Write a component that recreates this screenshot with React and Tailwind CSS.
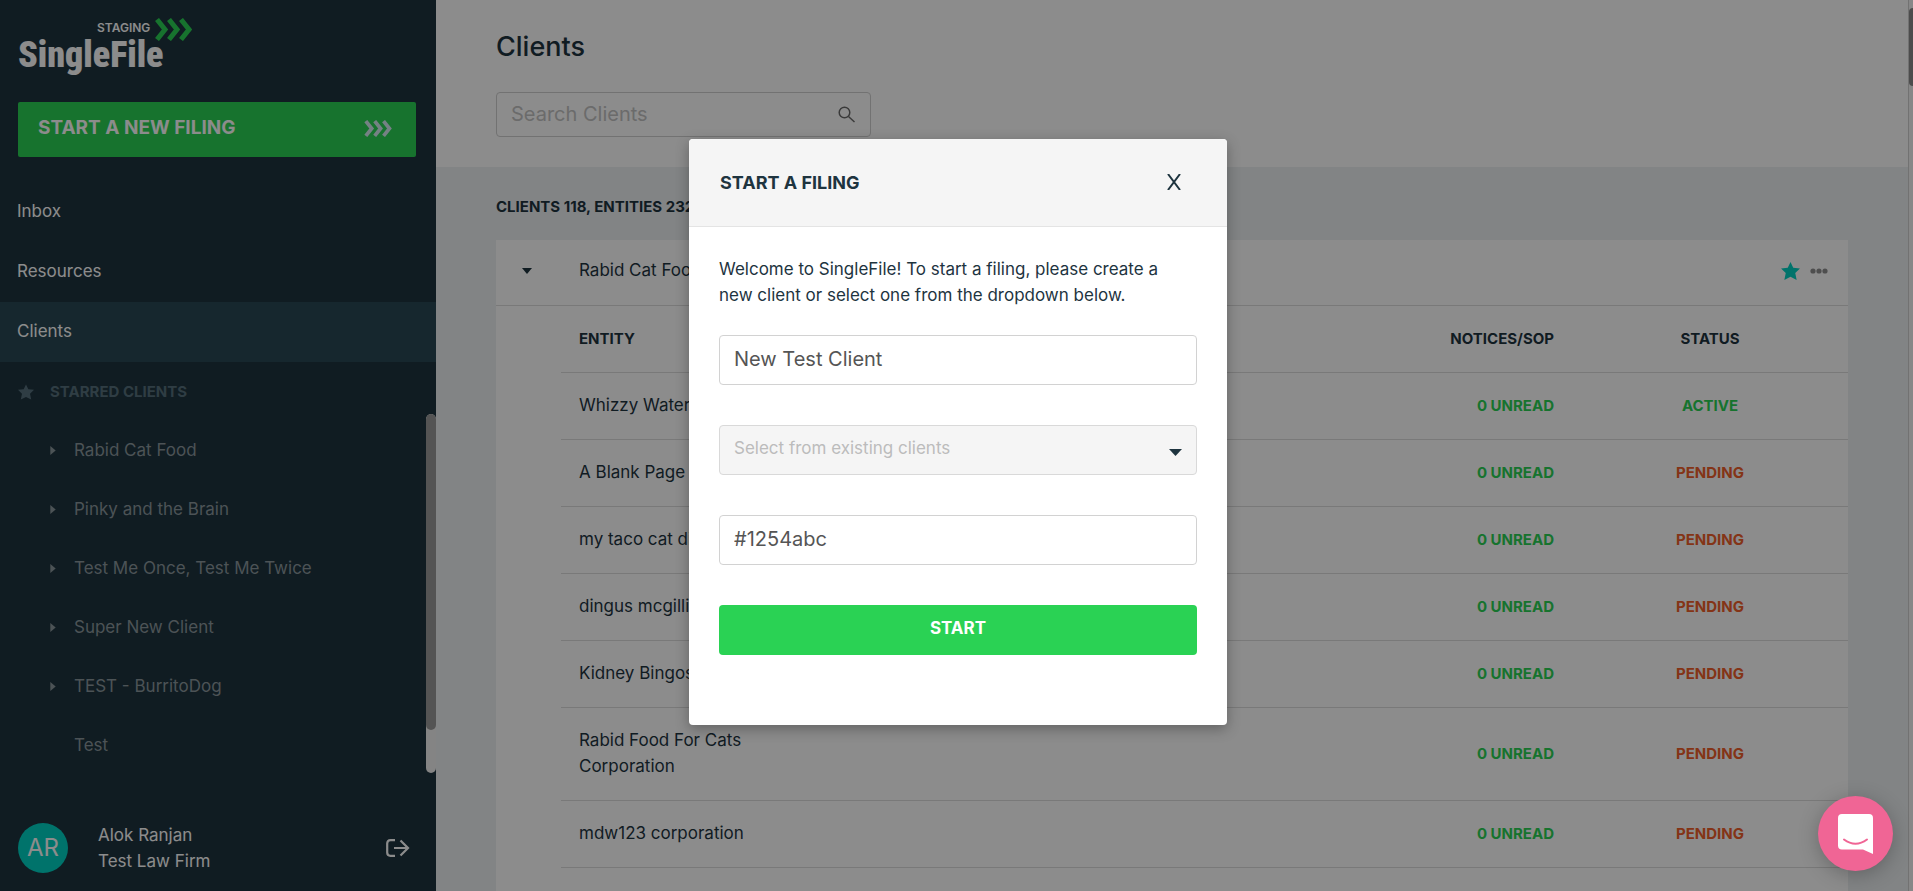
import React from "react";

const starred = [
  { name: "Rabid Cat Food", open: true },
  { name: "Pinky and the Brain", open: true },
  { name: "Test Me Once, Test Me Twice", open: true },
  { name: "Super New Client", open: true },
  { name: "TEST - BurritoDog", open: true },
  { name: "Test", open: false },
];

const entities = [
  { name: "Whizzy Water", status: "ACTIVE" },
  { name: "A Blank Page", status: "PENDING" },
  { name: "my taco cat diner", status: "PENDING" },
  { name: "dingus mcgillicuddy", status: "PENDING" },
  { name: "Kidney Bingos", status: "PENDING" },
  { name: "Rabid Food For Cats Corporation", status: "PENDING" },
  { name: "mdw123 corporation", status: "PENDING" },
];

function Chevrons({ className, strokeWidth }) {
  return (
    <svg viewBox="0 0 37 23" className={className} fill="none" stroke="currentColor" strokeWidth={strokeWidth} aria-hidden="true">
      <path d="M2 1.500 10 11.500 2 21.500M14 1.500 22 11.500 14 21.500M26 1.500 34 11.500 26 21.500" />
    </svg>
  );
}

function Star({ className }) {
  return (
    <svg viewBox="0 0 20 19" className={className} fill="currentColor" aria-hidden="true">
      <path d="M10 0l2.900 6 7.100.8-5 4.900 1.500 7.200L10 15.600l-6.500 3.300L5 11.700 0 6.800 7.100 6z" />
    </svg>
  );
}

function Logo() {
  return (
    <div className="flex h-[64px] w-fit flex-col">
      <div className="flex h-[23px] items-center justify-end gap-[5px] pl-[79px]">
        <span className="-mt-1 text-[12px] leading-4 font-semibold text-white">STAGING</span>
        <Chevrons className="h-[23px] w-[37px] text-[#2ad254]" strokeWidth="5" />
      </div>
      <span className="-mt-[5px] font-['Roboto_Condensed','Liberation_Sans_Narrow','Liberation_Sans',sans-serif] text-[36px] leading-[38px] font-black text-white">
        SingleFile
      </span>
    </div>
  );
}

function Sidebar() {
  return (
    <aside className="flex w-[436px] shrink-0 flex-col bg-[#1e343f] text-white">
      <div className="px-[18px] pt-[18px] pr-5">
        <Logo />
        <button type="button" className="mt-5 flex h-[55px] w-full items-center justify-between rounded-xs bg-[#2ad254] pr-6 pb-[3px] pl-5 text-[19px] font-bold">
          START A NEW FILING
          <Chevrons className="h-[17px] w-[28px] text-[#d5ecf0]" strokeWidth="5" />
        </button>
      </div>
      <nav className="mt-[25px] flex flex-col text-[17px]">
        <a href="#inbox" className="flex h-[60px] items-center px-[17px]">Inbox</a>
        <a href="#resources" className="flex h-[60px] items-center px-[17px]">Resources</a>
        <a href="#clients" className="flex h-[60px] items-center bg-[#284854] px-[17px]">Clients</a>
      </nav>
      <div className="flex h-[52px] items-end gap-4 px-[18px] pb-3 text-[#57707c]">
        <Star className="mb-[2px] h-4 w-4" />
        <h2 className="text-[15px] leading-5 font-bold">STARRED CLIENTS</h2>
      </div>
      <div className="flex min-h-0 flex-1 overflow-hidden">
        <ul className="flex-1 pt-[7px] text-[17px] text-[#8b979d]">
          {starred.map((c) => (
            <li key={c.name}>
              <a href="#client" className="flex h-[59px] items-center pl-[50px]">
                <span className="w-6">
                  {c.open && (
                    <svg viewBox="0 0 6 10" className="h-[9px] w-[6px]" fill="currentColor" aria-hidden="true">
                      <path d="M0 0l6 5-6 5z" />
                    </svg>
                  )}
                </span>
                {c.name}
              </a>
            </li>
          ))}
        </ul>
        <div className="w-[10px] overflow-hidden rounded-full bg-[#f1f1f1]">
          <div className="h-[88%] rounded-full bg-[#9a9a9a]" />
        </div>
      </div>
      <div className="mt-8 flex h-[86px] items-center gap-[30px] pr-[26px] pl-[18px]">
        <span className="flex h-[50px] w-[50px] items-center justify-center rounded-full bg-[#00d2c4] text-[24px]">AR</span>
        <p className="flex-1 text-[17px] leading-[26px]">
          Alok Ranjan
          <br />
          Test Law Firm
        </p>
        <button type="button" aria-label="Log out">
          <svg viewBox="0 0 24 18" className="h-[18px] w-6" fill="none" stroke="currentColor" strokeWidth="2.200" aria-hidden="true">
            <path d="M9 1.200H4.500Q1.200 1.200 1.200 4.500v9q0 3.300 3.300 3.300H9M8 9h14M14.500 1.500 22 9l-7.500 7.500" />
          </svg>
        </button>
      </div>
    </aside>
  );
}

function ClientsPage() {
  return (
    <main className="flex min-w-0 flex-1 flex-col bg-[#edf0f3] text-[#1e343f]">
      <header className="h-[167px] shrink-0 bg-white px-[60px] pt-[27px]">
        <h1 className="text-[27px] leading-10 font-medium">Clients</h1>
        <div className="mt-[25px] flex h-[45px] w-[375px] items-center rounded border border-[#cfcfcf] pr-[15px] pl-[14px]">
          <input type="search" aria-label="Search clients" placeholder="Search Clients" className="min-w-0 flex-1 bg-transparent pb-[2px] text-[20px] outline-none placeholder:text-[#c4c4c4]" />
          <svg viewBox="0 0 17 17" className="h-[17px] w-[17px] text-[#6b6b6b]" fill="none" stroke="currentColor" strokeWidth="1.500" aria-hidden="true">
            <circle cx="6.500" cy="6.500" r="5.300" />
            <path d="M10.500 10.500l6 5.500" />
          </svg>
        </div>
      </header>
      <section className="flex flex-1 flex-col px-[60px] pt-[30px]">
        <h2 className="text-[15px] leading-5 font-bold">CLIENTS 118, ENTITIES 232</h2>
        <div className="mt-[23px] flex-1 bg-white">
          <div className="flex h-[66px] items-center border-b border-[#dcdcdc] pr-5 pb-[3px] pl-[26px]">
            <button type="button" aria-label="Collapse Rabid Cat Food" className="w-[57px]">
              <svg viewBox="0 0 10 6" className="h-[6px] w-[10px]" fill="currentColor" aria-hidden="true">
                <path d="M0 0h10L5 6z" />
              </svg>
            </button>
            <span className="flex-1 text-[17px]">Rabid Cat Food</span>
            <button type="button" aria-label="Unstar client" className="text-[#00d2c4]">
              <Star className="h-[18px] w-[19px]" />
            </button>
            <button type="button" aria-label="More actions" className="ml-[10px] text-[#8f8f8f]">
              <svg viewBox="0 0 18 6" className="h-[6px] w-[18px]" fill="currentColor" aria-hidden="true">
                <circle cx="3" cy="3" r="2.600" />
                <circle cx="9" cy="3" r="2.600" />
                <circle cx="15" cy="3" r="2.600" />
              </svg>
            </button>
          </div>
          <div className="pl-[65px]">
            <table className="w-full border-collapse text-[15px] font-bold">
              <thead>
                <tr className="h-[66px] border-b border-[#dcdcdc]">
                  <th scope="col" className="pl-[18px] text-left">ENTITY</th>
                  <th scope="col" className="pr-[18px] text-right">NOTICES/SOP</th>
                  <th scope="col" className="w-[276px] text-center">STATUS</th>
                </tr>
              </thead>
              <tbody>
                {entities.map((e) => (
                  <tr key={e.name} className="h-[67px] border-b border-[#dcdcdc]">
                    <td className="pt-[19px] pb-[21px] pl-[18px] text-[17px] leading-[26px] font-normal">
                      <span className="block max-w-[200px]">{e.name}</span>
                    </td>
                    <td className="pt-[2px] pr-[18px] text-right text-[#2ad254]">0 UNREAD</td>
                    <td className={e.status === "ACTIVE" ? "pt-[2px] text-center text-[#2ad254]" : "pt-[2px] text-center text-[#f0602a]"}>{e.status}</td>
                  </tr>
                ))}
              </tbody>
            </table>
          </div>
        </div>
      </section>
    </main>
  );
}

function FilingDialog() {
  return (
    <div role="dialog" aria-labelledby="filing-title" className="w-[538px] overflow-hidden rounded bg-white text-[#1e343f] shadow-[0_4px_14px_rgba(0,0,0,0.3)]">
      <div className="flex h-[88px] items-center justify-between border-b border-[#e4e4e4] bg-[#f5f5f5] pr-[46px] pl-[31px]">
        <h2 id="filing-title" className="text-[18px] leading-6 font-bold">START A FILING</h2>
        <button type="button" aria-label="Close" className="pb-[2px]">
          <svg viewBox="0 0 14 16" className="h-4 w-[14px]" fill="none" stroke="currentColor" strokeWidth="2" aria-hidden="true">
            <path d="M1 0l12 16M13 0L1 16" />
          </svg>
        </button>
      </div>
      <form className="flex flex-col gap-10 px-[30px] pt-[29px] pb-[70px]" onSubmit={(e) => e.preventDefault()}>
        <p className="-mb-[13px] pr-4 text-[17px] leading-[26px]">
          Welcome to SingleFile! To start a filing, please create a new client or select one from the dropdown below.
        </p>
        <input type="text" aria-label="Client name" defaultValue="New Test Client" className="h-[50px] w-full rounded border border-[#d2d2d2] px-[14px] pb-[3px] text-[20px] text-[#555]" />
        <div className="relative">
          <select aria-label="Existing client" defaultValue="" className="h-[50px] w-full appearance-none rounded border border-[#d9d9d9] bg-[#f5f5f5] px-[14px] pb-[2px] text-[17px] text-[#bcbcbc]">
            <option value="">Select from existing clients</option>
          </select>
          <svg viewBox="0 0 13 7" className="pointer-events-none absolute top-6 right-[15px] h-[7px] w-[13px]" fill="currentColor" aria-hidden="true">
            <path d="M0 0h13L6.500 7z" />
          </svg>
        </div>
        <input type="text" aria-label="Reference number" defaultValue="#1254abc" className="h-[50px] w-full rounded border border-[#d2d2d2] px-[14px] pb-[3px] text-[20px] text-[#555]" />
        <button type="submit" className="h-[50px] w-full rounded bg-[#2ad254] pb-[2px] text-[17px] font-bold text-white">START</button>
      </form>
    </div>
  );
}

export default function App() {
  return (
    <div className="relative flex h-screen overflow-hidden font-[Inter,'Liberation_Sans',sans-serif]">
      <Sidebar />
      <ClientsPage />
      <div className="w-[5px] shrink-0 border-l border-[#cfcfcf] bg-[#f6f6f6] pt-2">
        <div className="h-[78px] rounded-l bg-[#8a8a8a]" />
      </div>
      <div className="absolute inset-0 flex items-start justify-center bg-black/45 pt-[139px] pl-[3px]">
        <FilingDialog />
      </div>
      <button type="button" aria-label="Open chat" className="absolute right-5 bottom-5 flex h-[75px] w-[75px] items-center justify-center rounded-full bg-[#f06595] shadow-[0_4px_20px_rgba(0,0,0,0.25)]">
        <svg viewBox="0 0 35 40" className="h-10 w-[35px]" aria-hidden="true">
          <path d="M4 0h27q4 0 4 4v36l-10-4.500H4q-4 0-4-4V4q0-4 4-4z" fill="#fff" />
          <path d="M6 25.500q11.500 8.500 23 0" fill="none" stroke="#f06595" strokeWidth="2" strokeLinecap="round" />
        </svg>
      </button>
    </div>
  );
}
